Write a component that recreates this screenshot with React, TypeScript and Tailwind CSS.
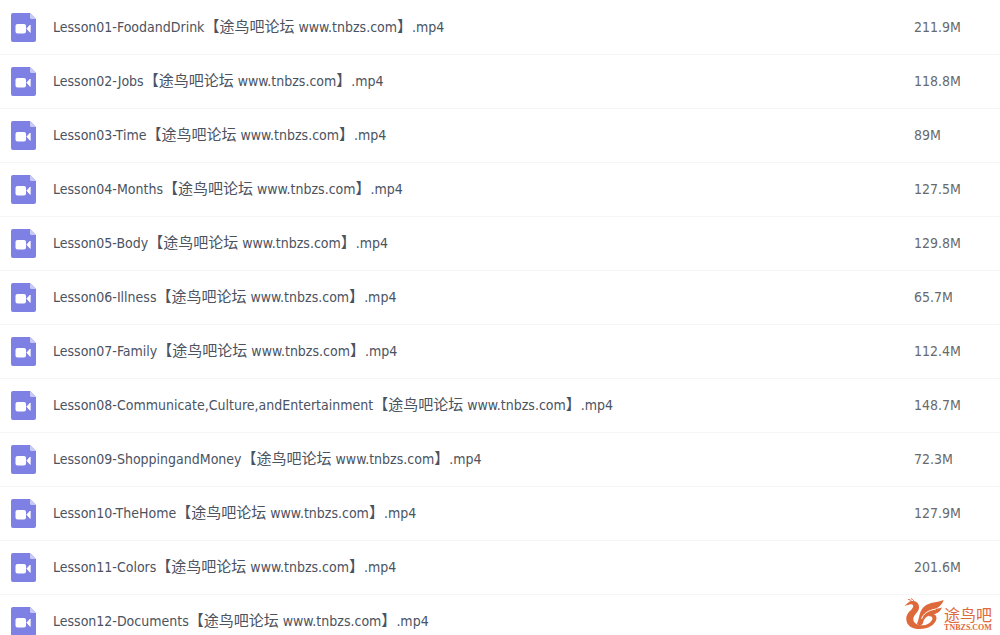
import React from 'react';

interface VideoFile {
  title: string;
  size?: string;
}

const files: VideoFile[] = [
  { title: 'Lesson01-FoodandDrink', size: '211.9M' },
  { title: 'Lesson02-Jobs', size: '118.8M' },
  { title: 'Lesson03-Time', size: '89M' },
  { title: 'Lesson04-Months', size: '127.5M' },
  { title: 'Lesson05-Body', size: '129.8M' },
  { title: 'Lesson06-Illness', size: '65.7M' },
  { title: 'Lesson07-Family', size: '112.4M' },
  { title: 'Lesson08-Communicate,Culture,andEntertainment', size: '148.7M' },
  { title: 'Lesson09-ShoppingandMoney', size: '72.3M' },
  { title: 'Lesson10-TheHome', size: '127.9M' },
  { title: 'Lesson11-Colors', size: '201.6M' },
  { title: 'Lesson12-Documents' },
];

const VideoIcon: React.FC = () => (
  <svg className="mt-px h-[29px] w-[25px] shrink-0" viewBox="0 0 25 29" aria-hidden="true">
    <path d="M2 0H19L25 6V27a2 2 0 0 1-2 2H2a2 2 0 0 1-2-2V2a2 2 0 0 1 2-2Z" fill="#7f80e4" />
    <path d="M19 0L25 6H20.5a1.5 1.5 0 0 1-1.5-1.5Z" fill="#c9c9f7" />
    <rect x="4.5" y="11" width="10.5" height="9.5" rx="2" fill="#fff" />
    <path d="M15.8 15.7L19.2 12V19.4Z" fill="#fff" stroke="#fff" strokeWidth="0.8" strokeLinejoin="round" />
  </svg>
);

// 【途鸟吧论坛 www.tnbzs.com】, with the Chinese glyphs a step larger than the Latin
const SiteTag: React.FC = () => (
  <>
    <span className="text-[15px] leading-5">【途鸟吧论坛</span> www.tnbzs.com
    <span className="text-[15px] leading-5">】</span>
  </>
);

const SiteLogo: React.FC = () => (
  <div className="absolute right-2 bottom-1 flex items-end text-[#de6a3c]">
    <svg className="h-[34px] w-[41px]" viewBox="0 0 123 102" aria-hidden="true">
      {/* head and body */}
      <path
        d="M4 25C12 28 17 21 25 22C33 23 32 31 25 38C16 46 9 54 10 68C11 86 28 96 50 96C76 96 95 85 100 67C103 54 92 49 80 52L77 58C86 57 91 62 87 69C80 80 70 85 60 85C43 85 31 78 31 66C31 53 47 46 48 32C49 18 38 10 26 12C14 14 13 23 4 25Z"
        fill="currentColor"
      />
      <path d="M27 14C24 9 19 7 15 8M33 13C31 9 28 6 24 5" fill="none" stroke="currentColor" strokeWidth="3" />
      {/* wing */}
      <path
        d="M122 9C104 17 80 14 63 29C48 43 50 62 42 80C48 88 56 86 60 79C62 66 70 56 86 54C100 52 113 44 117 31C109 35 103 36 98 35C109 30 118 22 122 9Z"
        fill="currentColor"
      />
      <path d="M56 66C60 51 74 40 99 36" fill="none" stroke="#fff" strokeWidth="3" />
    </svg>
    <div className="flex flex-col items-center">
      <span className="font-['Noto_Sans_CJK_SC',sans-serif] text-base leading-5">途鸟吧</span>
      <span className="font-['Liberation_Serif',serif] text-[8px] leading-[7px] font-bold">TNBZS.COM</span>
    </div>
  </div>
);

const App: React.FC = () => {
  return (
    <div className="relative h-screen overflow-hidden bg-white font-['DejaVu_Sans_Condensed','Noto_Sans_CJK_SC',sans-serif] text-sm">
      <table className="w-full table-fixed border-collapse">
        <tbody>
          {files.map((file) => (
            <tr key={file.title} className="h-[54px] border-b border-[#f4f5f6]">
              <td className="p-0 pl-[11px]">
                <div className="flex items-center gap-[17px]">
                  <VideoIcon />
                  <span className="whitespace-nowrap text-[#4b535f]">
                    {file.title}
                    <SiteTag />
                    .mp4
                  </span>
                </div>
              </td>
              <td className="w-[86px] p-0 text-[#68696c]">{file.size}</td>
            </tr>
          ))}
        </tbody>
      </table>
      <SiteLogo />
    </div>
  );
};

export default App;
